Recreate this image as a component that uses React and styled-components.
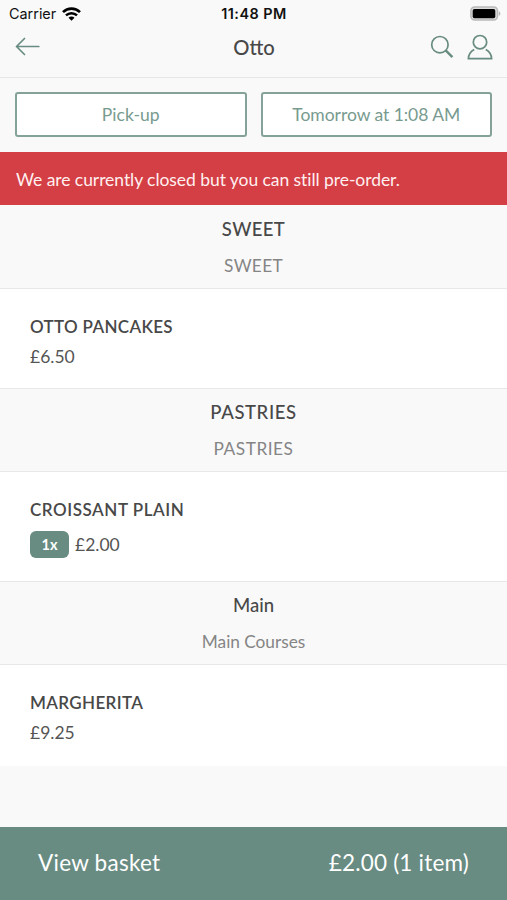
import React from "react";
import styled, { createGlobalStyle } from "styled-components";

const sections = [
  {
    title: "SWEET",
    subtitle: "SWEET",
    titleSpacing: "0.35px",
    subtitleSpacing: "0.3px",
    items: [{ name: "OTTO PANCAKES", price: "£6.50", height: 99, spacing: "0.33px" }],
  },
  {
    title: "PASTRIES",
    subtitle: "PASTRIES",
    titleSpacing: "0.6px",
    subtitleSpacing: "0.5px",
    items: [
      { name: "CROISSANT PLAIN", price: "£2.00", quantity: 1, height: 109, spacing: "0.54px" },
    ],
  },
  {
    title: "Main",
    subtitle: "Main Courses",
    titleSpacing: "0px",
    subtitleSpacing: "-0.03px",
    items: [{ name: "MARGHERITA", price: "£9.25", height: 101, spacing: "0.35px" }],
  },
];

const WifiIcon = () => (
  <svg width="19" height="14" viewBox="0 0 19 14" fill="none" stroke="#000">
    <path d="M1 5.1a12.2 12.2 0 0 1 17 0" strokeWidth="2.7" />
    <path d="M4 8.4a7.8 7.8 0 0 1 11 0" strokeWidth="2.5" />
    <path d="M9.5 13.8 6.5 10.8a4.2 4.2 0 0 1 6 0Z" fill="#000" stroke="none" />
  </svg>
);

const BatteryIcon = () => (
  <svg width="31" height="15" viewBox="0 0 31 15">
    <rect x="0.9" y="0.9" width="26.6" height="13.2" rx="3.8" fill="#dcdcdc" stroke="#b9b9b9" strokeWidth="1.5" />
    <rect x="2.7" y="2.9" width="22.6" height="9.4" rx="1.8" fill="#000" />
    <path d="M28.8 5.2c2 .8 2 3.8 0 4.6Z" fill="#b4b4b4" />
  </svg>
);

const BackIcon = () => (
  <svg width="26" height="20" viewBox="0 0 26 20" fill="none" stroke="#688b82" strokeWidth="1.7" strokeLinecap="round" strokeLinejoin="round">
    <path d="M23.8 9.5H1.5M9.5 1.5l-8 8 8 8" />
  </svg>
);

const SearchIcon = () => (
  <svg width="24" height="24" viewBox="0 0 24 24" fill="none" stroke="#688b82">
    <circle cx="9.9" cy="9.7" r="8.2" strokeWidth="1.7" />
    <path d="m15.4 15.2 7 6.9" strokeWidth="2.4" />
  </svg>
);

const UserIcon = () => (
  <svg width="26" height="26" viewBox="0 0 26 26" fill="none" stroke="#688b82" strokeWidth="1.7">
    <circle cx="13" cy="8.2" r="6.7" />
    <path d="M7.2 15.5C4 17.3 1.6 20.4 1.4 24.6h23.2c-.2-4.2-2.6-7.3-5.8-9.1" />
  </svg>
);

const App = () => {
  return (
    <>
      <GlobalStyle />
      <Screen>
        <StatusBar>
          <Carrier>
            Carrier
            <WifiIcon />
          </Carrier>
          <Time>11:48 PM</Time>
          <Battery>
            <BatteryIcon />
          </Battery>
        </StatusBar>

        <NavBar>
          <IconButton aria-label="Back">
            <BackIcon />
          </IconButton>
          <Title>Otto</Title>
          <Actions>
            <IconButton aria-label="Search">
              <SearchIcon />
            </IconButton>
            <IconButton aria-label="Account">
              <UserIcon />
            </IconButton>
          </Actions>
        </NavBar>

        <Options>
          <OptionButton $spacing="0.05px">Pick-up</OptionButton>
          <OptionButton $spacing="-0.04px">Tomorrow at 1:08 AM</OptionButton>
        </Options>

        <Notice>We are currently closed but you can still pre-order.</Notice>

        <Menu>
          {sections.map((section) => (
            <section key={section.title}>
              <SectionHeader>
                <SectionTitle $spacing={section.titleSpacing}>{section.title}</SectionTitle>
                <SectionSubtitle $spacing={section.subtitleSpacing}>
                  {section.subtitle}
                </SectionSubtitle>
              </SectionHeader>
              {section.items.map((item) => (
                <Item key={item.name} $height={item.height}>
                  <ItemName $spacing={item.spacing}>{item.name}</ItemName>
                  <PriceRow $tall={Boolean(item.quantity)}>
                    {item.quantity && <Quantity>{item.quantity}x</Quantity>}
                    <Price>{item.price}</Price>
                  </PriceRow>
                </Item>
              ))}
            </section>
          ))}
        </Menu>

        <BasketBar>
          <BasketText $spacing="0.25px">View basket</BasketText>
          <BasketText $spacing="0.2px">£2.00 (1 item)</BasketText>
        </BasketBar>
      </Screen>
    </>
  );
};

export default App;

const GlobalStyle = createGlobalStyle`
  * {
    box-sizing: border-box;
    margin: 0;
    padding: 0;
  }

  body {
    background: #f9f9f9;
    font-family: Lato, "Open Sans", sans-serif;
    color: #484848;
  }

  button {
    font-family: inherit;
    border: none;
    background: none;
  }

  svg {
    display: block;
  }
`;

const Screen = styled.div`
  display: flex;
  flex-direction: column;
  width: 507px;
  height: 900px;
  overflow: hidden;
  background: #f9f9f9;
`;

const StatusBar = styled.div`
  display: grid;
  grid-template-columns: 1fr auto 1fr;
  align-items: center;
  height: 27px;
  padding: 0 6px 0 9px;
  font-family: Inter, sans-serif;
  color: #111;
`;

const Carrier = styled.div`
  display: flex;
  align-items: center;
  gap: 6px;
  font-size: 14.4px;
`;

const Time = styled.div`
  font-size: 14.4px;
  font-weight: 600;
  letter-spacing: 0.5px;
  margin-right: 2px;
`;

const Battery = styled.div`
  display: flex;
  justify-content: flex-end;
`;

const NavBar = styled.header`
  display: grid;
  grid-template-columns: 1fr auto 1fr;
  align-items: center;
  height: 51px;
  padding: 0 14px 10px 15px;
  border-bottom: 1px solid #e6e6e6;
`;

const IconButton = styled.button`
  justify-self: start;
`;

const Title = styled.h1`
  font-size: 20.2px;
  font-weight: 500;
  line-height: 26px;
`;

const Actions = styled.div`
  display: flex;
  justify-content: flex-end;
  align-items: center;
  gap: 13px;
`;

const Options = styled.div`
  display: grid;
  grid-template-columns: 1fr 1fr;
  gap: 14px;
  height: 74px;
  padding: 14px 15px 15px;
`;

const OptionButton = styled.button`
  height: 45px;
  border: 2px solid #84a29a;
  border-radius: 3px;
  background: #fff;
  color: #789b90;
  font-size: 17.5px;
  letter-spacing: ${(props) => props.$spacing};
`;

const Notice = styled.div`
  height: 53px;
  padding-left: 16px;
  background: #d43e45;
  color: #fff0ef;
  font-size: 17.5px;
  line-height: 56px;
  letter-spacing: -0.06px;
`;

const Menu = styled.main`
  flex: 1;
`;

const SectionHeader = styled.div`
  height: 84px;
  padding-top: 11px;
  border-bottom: 1px solid #e8e8e8;
  text-align: center;

  section + section & {
    padding-top: 10px;
    border-top: 1px solid #e8e8e8;
  }
`;

const SectionTitle = styled.h2`
  font-size: 18.5px;
  font-weight: 500;
  line-height: 26px;
  letter-spacing: ${(props) => props.$spacing};
`;

const SectionSubtitle = styled.p`
  margin-top: 11px;
  color: #858585;
  font-size: 17.3px;
  line-height: 26px;
  letter-spacing: ${(props) => props.$spacing};
`;

const Item = styled.article`
  height: ${(props) => props.$height}px;
  padding: 25px 30px 0;
  background: #fff;
`;

const ItemName = styled.h3`
  font-size: 17px;
  font-weight: 600;
  line-height: 26px;
  letter-spacing: ${(props) => props.$spacing};
`;

const PriceRow = styled.div`
  display: flex;
  align-items: center;
  gap: 6px;
  height: ${(props) => (props.$tall ? 27 : 26)}px;
  margin-top: ${(props) => (props.$tall ? 8 : 4)}px;
`;

const Quantity = styled.span`
  width: 39px;
  height: 27px;
  border-radius: 6px;
  background: #688b82;
  color: #fff;
  font-size: 14.5px;
  font-weight: 700;
  line-height: 27px;
  text-align: center;
`;

const Price = styled.span`
  color: #555;
  font-size: 17.5px;
  line-height: 26px;
`;

const BasketBar = styled.footer`
  display: flex;
  justify-content: space-between;
  align-items: center;
  height: 73px;
  padding: 0 38px 1px;
  background: #688b82;
  color: #fff;
`;

const BasketText = styled.span`
  font-size: 22.5px;
  line-height: 30px;
  letter-spacing: ${(props) => props.$spacing};
`;
